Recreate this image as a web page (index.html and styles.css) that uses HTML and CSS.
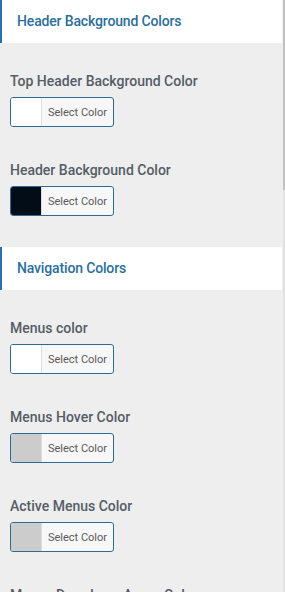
FILE: index.html
```html
<!DOCTYPE html>
<html>
<head>
<meta charset="utf-8">
<link rel="stylesheet" href="styles.css">
</head>
<body>
<div class="panel">
  <div class="section-title">Header Background Colors</div>
  <div class="fields">
    <div class="field">
      <div class="label">Top Header Background Color</div>
      <button class="picker"><span class="swatch swatch-white"></span><span class="picker-text">Select Color</span></button>
    </div>
    <div class="field">
      <div class="label">Header Background Color</div>
      <button class="picker"><span class="swatch swatch-dark"></span><span class="picker-text">Select Color</span></button>
    </div>
  </div>
  <div class="section-title">Navigation Colors</div>
  <div class="fields">
    <div class="field">
      <div class="label">Menus color</div>
      <button class="picker"><span class="swatch swatch-white"></span><span class="picker-text">Select Color</span></button>
    </div>
    <div class="field">
      <div class="label">Menus Hover Color</div>
      <button class="picker"><span class="swatch swatch-gray"></span><span class="picker-text">Select Color</span></button>
    </div>
    <div class="field">
      <div class="label">Active Menus Color</div>
      <button class="picker"><span class="swatch swatch-gray"></span><span class="picker-text">Select Color</span></button>
    </div>
    <div class="field">
      <div class="label">Menus Dropdown Arrow Color</div>
      <button class="picker"><span class="swatch swatch-white"></span><span class="picker-text">Select Color</span></button>
    </div>
  </div>
</div>
<div class="scrollbar"><div class="thumb"></div></div>
</body>
</html>
```
FILE: styles.css
```css
html, body {
  margin: 0;
  padding: 0;
  background: #eeeeee;
  overflow: hidden;
}
body {
  font-family: Roboto, "Liberation Sans", sans-serif;
  height: 592px;
}
.panel {
  width: 282px;
}
.section-title {
  height: 43px;
  box-sizing: border-box;
  background: #ffffff;
  border-left: 2px solid #2271b1;
  padding: 13px 0 0 15px;
  font-size: 14px;
  line-height: 16px;
  font-weight: 500;
  letter-spacing: -0.15px;
  color: #2a6f9d;
}
.fields {
  display: flex;
  flex-direction: column;
  gap: 35px;
  padding: 30px 10px 31px;
}
.field {
  display: flex;
  flex-direction: column;
  align-items: flex-start;
  gap: 8px;
}
.label {
  font-size: 14px;
  line-height: 16px;
  font-weight: 500;
  color: #555d66;
}
.picker {
  display: flex;
  align-items: stretch;
  width: 104px;
  height: 30px;
  padding: 0;
  margin: 0;
  border: 1px solid #2e6b94;
  border-radius: 3px;
  background: #f7f7f7;
  overflow: hidden;
  font-family: inherit;
  cursor: pointer;
}
.swatch {
  width: 30px;
  flex: none;
  border-right: 1px solid #dddddd;
}
.swatch-white { background: #ffffff; }
.swatch-dark { background: #030d18; }
.swatch-gray { background: #cccccc; }
.picker-text {
  flex: 1;
  display: flex;
  align-items: center;
  justify-content: center;
  font-size: 11px;
  color: #5a5a5a;
}
.scrollbar {
  position: fixed;
  top: 0;
  right: 0;
  width: 2px;
  height: 592px;
  background: #e2e2e2;
}
.thumb {
  height: 190px;
  background: #c2c2c2;
}
```
